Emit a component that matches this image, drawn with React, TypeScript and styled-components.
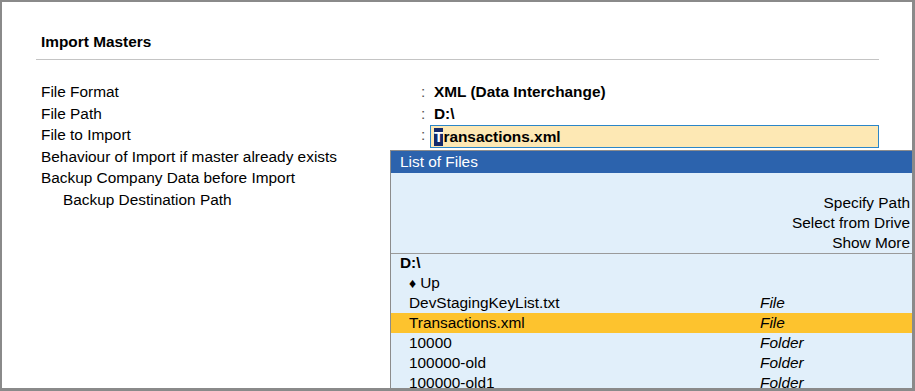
import React from "react";
import styled, { createGlobalStyle } from "styled-components";

const GlobalStyle = createGlobalStyle`
  html, body {
    margin: 0;
    padding: 0;
    background: #ffffff;
  }
  body {
    font-family: "Liberation Sans", Arial, sans-serif;
    font-size: 15.4px;
    color: #000;
  }
`;

const Frame = styled.div`
  position: relative;
  box-sizing: border-box;
  width: 915px;
  height: 391px;
  overflow: hidden;
  background: #fff;
  border-style: solid;
  border-color: #8a8a8a;
  border-width: 2px 3px 3px 2px;
`;

const Content = styled.div`
  padding: 31px 33px 0 34px;
`;

const Title = styled.div`
  font-weight: 700;
  line-height: 18px;
  padding: 0 0 8px 5px;
  border-bottom: 1px solid #c4c4c4;
`;

const Fields = styled.div`
  display: grid;
  grid-template-columns: 379px 10px 1fr;
  grid-auto-rows: 21.5px;
  line-height: 21.5px;
  padding: 21px 0 0 5px;
`;

const Label = styled.div<{ $indent?: boolean }>`
  grid-column: 1;
  padding-left: ${(p) => (p.$indent ? "22px" : "0")};
  white-space: nowrap;
`;

const Colon = styled.div`
  grid-column: 2;
  color: #555;
  padding-left: 1px;
`;

const Value = styled.div`
  grid-column: 3;
  font-weight: 700;
  padding-left: 4px;
  white-space: nowrap;
`;

const EditBox = styled.div`
  grid-column: 3;
  box-sizing: border-box;
  height: 23px;
  margin-top: 1px;
  border: 1px solid #2b86c8;
  background: #fde8b4;
  font-weight: 700;
  line-height: 21px;
  padding-left: 3px;
  white-space: nowrap;
`;

const Cursor = styled.span`
  display: inline-block;
  background: #13296a;
  color: #fff;
  line-height: 18px;
`;

const Popup = styled.div`
  position: absolute;
  left: 388px;
  top: 148px;
  right: 0;
  bottom: 0;
  box-sizing: border-box;
  border-left: 1px solid #8c8c8c;
  border-top: 1px solid #8c8c8c;
  background: #e1effa;
  display: flex;
  flex-direction: column;
`;

const PopupHeader = styled.div`
  background: #2c63ad;
  color: #fff;
  height: 22px;
  line-height: 22px;
  padding-left: 9px;
`;

const Actions = styled.div`
  display: flex;
  flex-direction: column;
  align-items: flex-end;
  padding: 20px 2px 0 0;
  line-height: 20px;
  border-bottom: 1px solid #9a9a9a;
`;

const ListBody = styled.div`
  line-height: 20px;
  margin-top: -1px;
`;

const DriveRow = styled.div`
  font-weight: 700;
  padding-left: 9px;
`;

const FileRow = styled.div<{ $selected?: boolean }>`
  display: grid;
  grid-template-columns: 351px 1fr;
  padding-left: 18px;
  background: ${(p) => (p.$selected ? "#fdc32e" : "transparent")};
`;

const Kind = styled.span`
  font-style: italic;
`;

const Diamond = styled.span`
  font-size: 14px;
  margin-right: 4px;
`;

const files = [
  { name: "DevStagingKeyList.txt", kind: "File" },
  { name: "Transactions.xml", kind: "File", selected: true },
  { name: "10000", kind: "Folder" },
  { name: "100000-old", kind: "Folder" },
  { name: "100000-old1", kind: "Folder" },
];

export default function App() {
  return (
    <>
      <GlobalStyle />
      <Frame>
        <Content>
          <Title>Import Masters</Title>
          <Fields>
            <Label>File Format</Label>
            <Colon>:</Colon>
            <Value>XML (Data Interchange)</Value>
            <Label>File Path</Label>
            <Colon>:</Colon>
            <Value>D:\</Value>
            <Label>File to Import</Label>
            <Colon>:</Colon>
            <EditBox>
              <Cursor>T</Cursor>ransactions.xml
            </EditBox>
            <Label>Behaviour of Import if master already exists</Label>
            <Label>Backup Company Data before Import</Label>
            <Label $indent>Backup Destination Path</Label>
          </Fields>
        </Content>
        <Popup>
          <PopupHeader>List of Files</PopupHeader>
          <Actions>
            <span>Specify Path</span>
            <span>Select from Drive</span>
            <span>Show More</span>
          </Actions>
          <ListBody>
            <DriveRow>D:\</DriveRow>
            <FileRow>
              <span>
                <Diamond>♦</Diamond>Up
              </span>
            </FileRow>
            {files.map((f) => (
              <FileRow key={f.name} $selected={f.selected}>
                <span>{f.name}</span>
                <Kind>{f.kind}</Kind>
              </FileRow>
            ))}
          </ListBody>
        </Popup>
      </Frame>
    </>
  );
}
